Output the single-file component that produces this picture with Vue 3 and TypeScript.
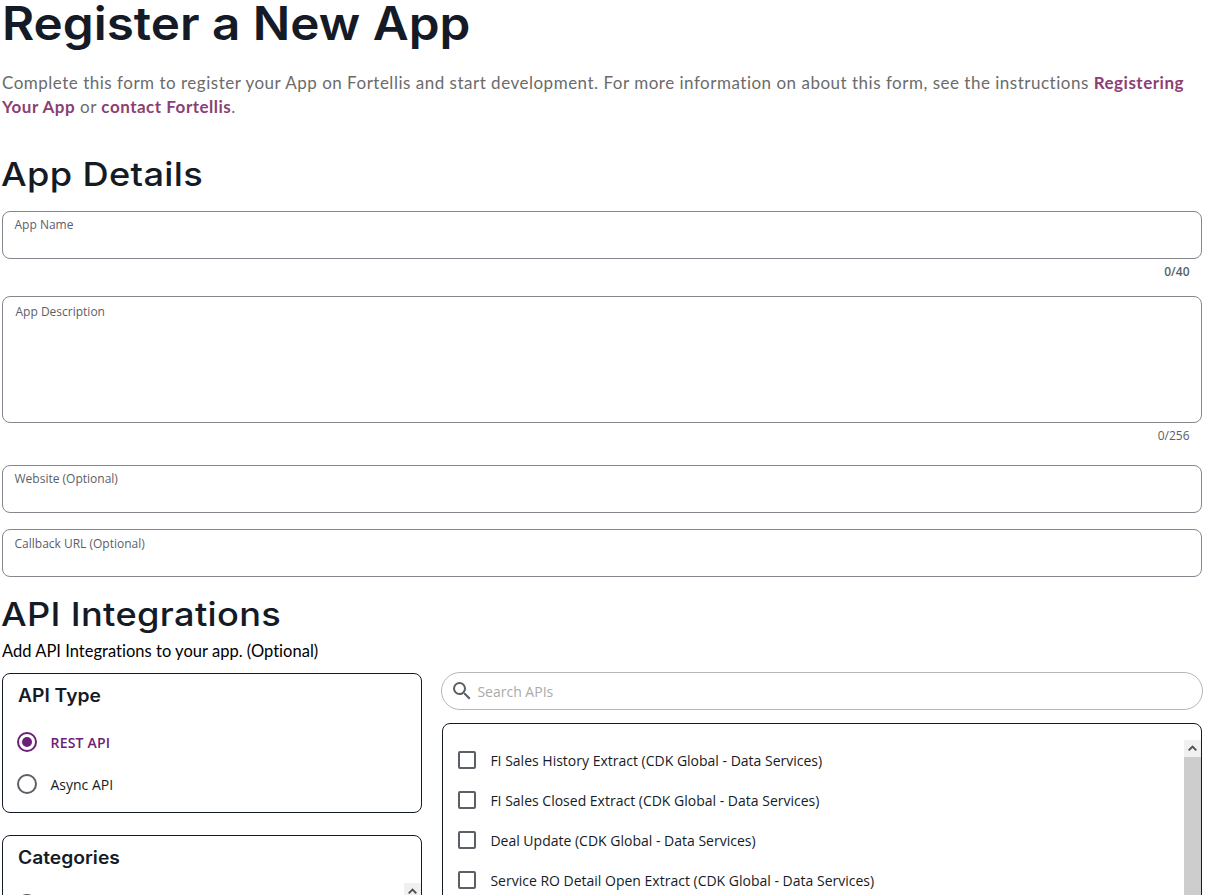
<script setup lang="ts">
import { ref } from 'vue'

const apiTypes: string[] = ['REST API', 'Async API']
const selectedType = ref('REST API')
const apis: string[] = [
  'FI Sales History Extract (CDK Global - Data Services)',
  'FI Sales Closed Extract (CDK Global - Data Services)',
  'Deal Update (CDK Global - Data Services)',
  'Service RO Detail Open Extract (CDK Global - Data Services)',
]
</script>

<template>
  <main class="page">
    <h1><span>Register a New App</span></h1>
    <p class="intro">
      Complete this form to register your App on Fortellis and start development. For more information on about this form, see the instructions <a>Registering</a><br>
      <a>Your App</a> or <a>contact Fortellis</a>.
    </p>

    <h2 class="details"><span>App Details</span></h2>
    <div class="field"><label>App Name</label></div>
    <div class="count strong">0/40</div>
    <div class="field area"><label>App Description</label></div>
    <div class="count">0/256</div>
    <div class="field website"><label>Website (Optional)</label></div>
    <div class="field callback"><label>Callback URL (Optional)</label></div>

    <h2 class="integrations"><span>API Integrations</span></h2>
    <p class="hint">Add API Integrations to your app. (Optional)</p>

    <div class="columns">
      <div class="left">
        <section class="card types">
          <h3><span>API Type</span></h3>
          <div
            v-for="t in apiTypes" :key="t" class="option"
            :class="{ on: t === selectedType }" @click="selectedType = t"
          >
            <i class="radio" /><span>{{ t }}</span>
          </div>
        </section>
        <section class="card categories">
          <h3><span>Categories</span></h3>
          <div class="cat-list">
            <i class="radio" />
            <div class="scroll">
              <div class="scroll-btn">
                <svg width="17" height="17" viewBox="0 0 17 17"><path d="M4.7 10.4 8.5 6.6l3.8 3.8" /></svg>
              </div>
            </div>
          </div>
        </section>
      </div>
      <div class="right">
        <div class="search">
          <svg class="magnifier" width="24" height="24" viewBox="0 0 24 24"><path d="M15.5 14h-.79l-.28-.27A6.471 6.471 0 0 0 16 9.5 6.5 6.5 0 1 0 9.5 16c1.61 0 3.09-.59 4.23-1.57l.27.28v.79l5 4.99L20.49 19l-4.99-5zm-6 0C7.01 14 5 11.99 5 9.5S7.01 5 9.5 5 14 7.01 14 9.5 11.99 14 9.5 14z" /></svg>
          <span>Search APIs</span>
        </div>
        <section class="card apis">
          <div class="api-list">
            <div v-for="a in apis" :key="a" class="api">
              <i class="check" /><span>{{ a }}</span>
            </div>
          </div>
          <div class="scroll">
            <div class="scroll-btn">
              <svg width="17" height="17" viewBox="0 0 17 17"><path d="M4.7 10.4 8.5 6.6l3.8 3.8" /></svg>
            </div>
          </div>
        </section>
      </div>
    </div>
  </main>
</template>

<style>
html, body { margin: 0; overflow: hidden; background: #fff; }
</style>

<style scoped>
* { box-sizing: border-box; }
.page {
  height: 895px;
  padding: 0 4px 0 2px;
  font-family: "Open Sans", "Noto Sans", sans-serif;
  color: #151b26;
}
h1, h2, h3, p { margin: 0; white-space: nowrap; }
h1, h2, h3 { font-family: Inter, sans-serif; }
/* Headings are set slightly extended */
h1 span, h2 span, h3 span { display: inline-block; transform-origin: 0 50%; }
h1 { height: 47px; line-height: 47px; font-size: 46px; font-weight: 600; letter-spacing: 0; }
h1 span { transform: scaleX(1.074); }
.intro {
  margin-top: 24px;
  font: 400 17px/24px Lato, sans-serif;
  letter-spacing: 0.505px;
  color: #6b6b6b;
}
.intro a { color: #8b3f75; font-weight: 700; }
h2 { height: 40px; line-height: 40px; font-size: 33px; font-weight: 500; letter-spacing: 0.3px; }
h2 span { margin-left: -1px; transform: scaleX(1.098); }
.details { margin: 35px 0 17px; }
.field {
  width: 1200px;
  height: 48px;
  border: 1px solid #86878e;
  border-radius: 8px;
  padding: 5px 11.5px;
}
.field label { display: block; font-size: 12px; line-height: 16px; color: #5b6068; }
.area { height: 127px; margin-top: 13px; padding: 7px 12.5px; }
.count {
  height: 24px;
  padding: 5px 12.5px 0 0;
  text-align: right;
  font-size: 12px;
  line-height: 16px;
  color: #5b6068;
}
.strong { font-weight: 600; }
.website { margin-top: 18px; }
.callback { margin-top: 16px; padding-top: 6px; }
.integrations { margin-top: 17px; }
.hint { margin-top: 5px; font: 400 16.5px/24px Lato, sans-serif; letter-spacing: 0.02px; color: #000; }

.columns { display: flex; gap: 19px; height: 223px; margin-top: 9px; overflow: hidden; margin-right: -4px; }
.left { flex: none; width: 420px; padding-top: 1px; }
.right { flex: none; width: 762px; }
.card { border: 1px solid #151b26; border-radius: 8px; }
.types { height: 140px; padding: 10px 14px; }
h3 { height: 24px; line-height: 24px; padding-left: 0.6px; font-size: 18px; font-weight: 600; }
h3 span { transform: scaleX(1.07); }
.types h3 { margin-bottom: 13px; }
.option { display: flex; align-items: center; gap: 13.5px; height: 42px; font-size: 14px; }
.radio {
  display: grid;
  place-items: center;
  width: 20px;
  height: 20px;
  border: 2px solid #5b5f66;
  border-radius: 50%;
}
.on { color: #6c2077; font-weight: 600; letter-spacing: 0.2px; }
.on .radio { border-color: #6c2077; }
.on .radio::after { content: ''; width: 10px; height: 10px; border-radius: 50%; background: #6c2077; }
.categories { height: 300px; margin-top: 22px; padding: 10px 0 0 14px; }
.cat-list { display: flex; justify-content: space-between; margin-top: 13px; height: 200px; }
.cat-list .radio { margin-top: 11px; }
.scroll { width: 17px; background: #cdcdcd; }
.scroll-btn { height: 17px; background: #f0f0f0; }
.scroll svg { display: block; fill: none; stroke: #505050; stroke-width: 1.9; }
.search {
  display: flex;
  align-items: center;
  height: 38px;
  border: 1px solid #b7b7b7;
  border-radius: 19px;
  padding-left: 8px;
  font-size: 14px;
  color: #aaa;
}
.search span { margin-left: 3.4px; }
.magnifier { fill: #5b5f66; }
.apis {
  display: flex;
  justify-content: space-between;
  width: 760px;
  height: 300px;
  margin: 13px 0 0 1px;
  padding: 16px 0 0 15px;
}
.api { display: flex; align-items: center; gap: 14.4px; height: 40px; font-size: 14px; white-space: nowrap; }
.check { width: 18px; height: 18px; border: 2px solid #5b5f66; border-radius: 2px; }
</style>
